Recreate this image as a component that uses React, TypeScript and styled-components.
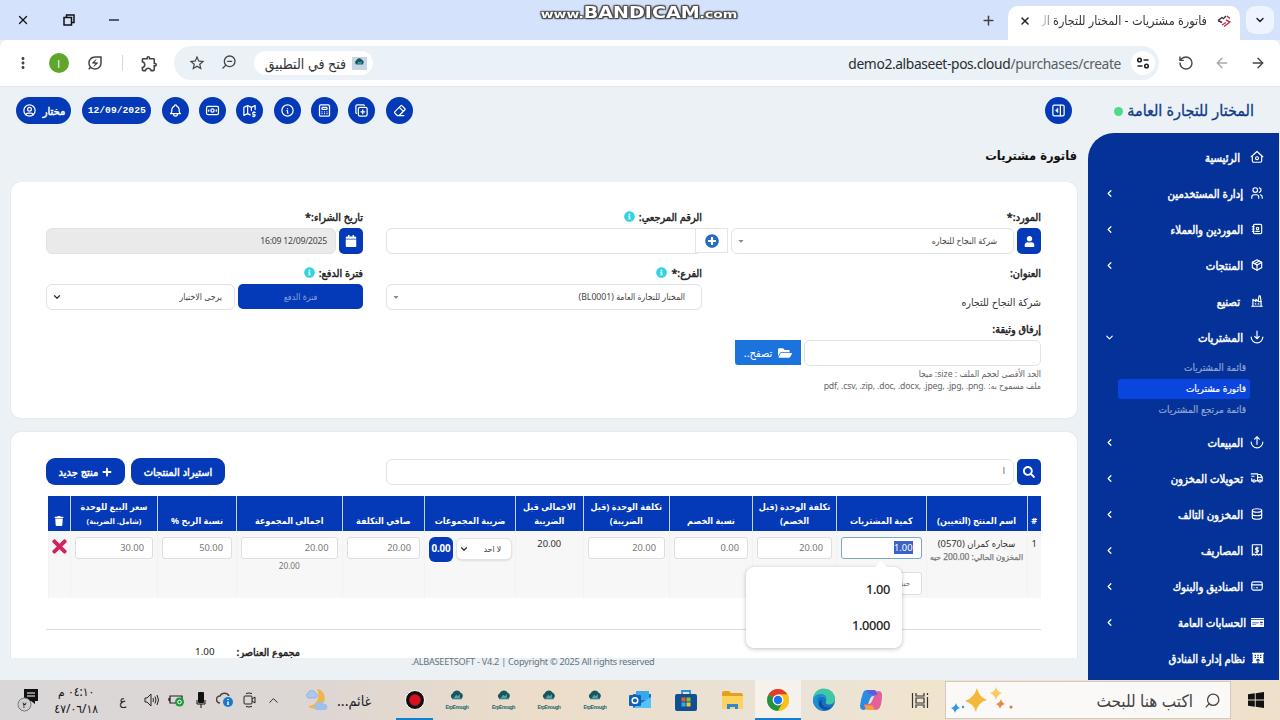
import React from 'react';
import styled, { createGlobalStyle, css } from 'styled-components';
import {
  TbBell, TbMapDollar, TbInfoCircle, TbCalculator, TbCopyPlus, TbEraser, TbUserCircle,
  TbUsers, TbAddressBook, TbPackage, TbBuildingFactory2, TbTruckDelivery, TbDatabase, TbCreditCard,
} from 'react-icons/tb';
import {
  FaUser, FaPlusCircle, FaInfoCircle, FaCalendar, FaFolderOpen, FaSearch, FaPlus, FaTrash, FaTimes,
  FaMoneyCheck, FaHotel, FaCaretDown,
} from 'react-icons/fa';
import { MdOutlineExtension, MdOutlineEnergySavingsLeaf, MdStarBorder, MdMoreVert } from 'react-icons/md';
import { ArrowLeft, ArrowRight, ChevronDown, ChevronLeft, ChevronUp, Plus, RotateCcw, Search, X, ZoomOut } from 'lucide-react';

const ui = `'Noto Sans', 'DejaVu Sans Condensed', 'DejaVu Sans', sans-serif`;
const primary = '#0439b7';
const heavy = css`font-weight: 400; -webkit-text-stroke: 0.45px currentColor;`;

const Global = createGlobalStyle`
  * { box-sizing: border-box; }
  body { margin: 0; overflow: hidden; font-family: ${ui}; color: #222; }
  svg { display: block; flex: none; }
`;

const Screen = styled.div`
  width: 1280px; height: 720px; display: flex; flex-direction: column;
  direction: rtl; position: relative; overflow: hidden; background: #ebf1f5; white-space: nowrap;
`;

/* ---------- browser chrome ---------- */
const TabStrip = styled.div`
  height: 40px; flex: none; background: #d4e3fb; display: flex; align-items: flex-end; padding: 0 6px 0 16px;
`;
const TabMenu = styled.div`
  width: 28px; height: 28px; margin-bottom: 6px; border-radius: 9px; background: #edf4fe;
  display: flex; align-items: center; justify-content: center;
`;
const Tab = styled.div`
  width: 232px; height: 34px; margin-right: 6px; background: #fff; border-radius: 10px 10px 0 0;
  display: flex; align-items: center; padding: 0 9px 4px 11px; gap: 10px;
`;
const TabTitle = styled.div`
  width: 166px; font-size: 12.5px; color: #333; line-height: 24px;
  mask-image: linear-gradient(to left, #000 152px, transparent 168px);
`;
const NewTab = styled.div`height: 40px; display: flex; align-items: center; margin-right: 12px;`;
const WindowButtons = styled.div`
  height: 40px; margin-right: auto; display: flex; align-items: center; gap: 33px; direction: ltr;
`;
const Watermark = styled.div`
  position: absolute; left: 539px; top: 4px; width: 200px; text-align: center; direction: ltr;
  font: bold 11px/19px 'DejaVu Sans', sans-serif; color: #fff; transform: scaleX(1.27);
  text-shadow: 0 0 2px #333, 1px 1px 1px #444, -1px -1px 1px #555, 1px -1px 1px #555, -1px 1px 1px #555;
  b { font-size: 15px; }
`;
const Toolbar = styled.div`
  height: 47px; flex: none; background: #fff; display: flex; align-items: center; padding: 0 14px 0 13px;
  border-bottom: 1px solid #e1e8ea; border-radius: 8px 8px 0 0; color: #444;
`;
const NavButtons = styled.div`display: flex; gap: 20px; direction: ltr;`;
const Omnibox = styled.div`
  width: 985px; height: 34px; flex: none; margin-right: 19px; border-radius: 17px; background: #eaf1f7;
  display: flex; align-items: center; padding: 0 4px 0 14px;
`;
const SiteInfo = styled.div`
  width: 24px; height: 24px; border-radius: 12px; background: #fff; display: flex; align-items: center; justify-content: center;
`;
const Url = styled.div`
  direction: ltr; font-size: 13.8px; letter-spacing: -0.37px; color: #5a5d60; margin-right: 10px;
  span { color: #2b2d30; }
`;
const OpenInApp = styled.div`
  margin-right: auto; width: 119px; height: 24px; border-radius: 12px; background: #fff; display: flex; align-items: center;
  padding: 0 6px; gap: 6px; font-size: 14px; color: #333;
`;
const OmniIcons = styled.div`display: flex; gap: 15px; margin-right: 17px;`;
const Extensions = styled.div`display: flex; align-items: center; margin-right: 15px;`;
const Divider = styled.i`width: 1.5px; height: 16px; background: #c9dbf5; margin: 0 17px 0 18px;`;
const Avatar = styled.div`
  width: 20px; height: 20px; border-radius: 50%; background: #5fa62b; color: #fff; font-size: 11px;
  display: flex; align-items: center; justify-content: center; margin: 0 17px 0 17px;
`;

/* ---------- application shell ---------- */
const AppArea = styled.div`height: 593px; flex: none; display: flex;`;
const Side = styled.aside`width: 192px; flex: none; display: flex; flex-direction: column; padding-right: 1px;`;
const Brand = styled.div`
  height: 46px; flex: none; display: flex; align-items: center; padding-right: 25px; gap: 4px;
  font-size: 16px; color: #123a8c; -webkit-text-stroke: 0.3px #123a8c;
  i { width: 9px; height: 9px; border-radius: 50%; background: #4fd98a; margin-top: 2px; }
`;
const Menu = styled.nav`
  flex: 1; background: #053298; border-top-left-radius: 26px; padding-top: 6px; overflow: hidden;
`;
const MenuItem = styled.div<{ $indent?: number }>`
  height: 36px; display: flex; align-items: center; padding: 0 15px 0 16px; color: #fff;
  font-size: 11.3px;
  span { margin-right: ${p => p.$indent ?? 7}px; margin-left: auto; ${heavy} }
`;
const SubMenu = styled.div`padding: 3px 29px 4px 30px; display: flex; flex-direction: column; gap: 1px;`;
const SubItem = styled.div<{ $active?: boolean }>`
  height: 20px; line-height: 19px; border-radius: 3px; padding-right: 4px; font-size: 10px;
  color: ${p => (p.$active ? '#fff' : '#8fa5d3')}; background: ${p => (p.$active ? '#0a45dd' : 'transparent')};
  -webkit-text-stroke: 0.2px currentColor;
`;
const Main = styled.main`width: 1088px; flex: none; display: flex; flex-direction: column; position: relative;`;
const Header = styled.header`height: 47px; flex: none; display: flex; align-items: center; padding: 0 16px;`;
const Actions = styled.div`display: flex; gap: 10.3px; margin-right: auto;`;
const Pill = styled.div<{ $w?: number }>`
  width: ${p => p.$w ?? 27}px; height: 27px; border-radius: 14px; background: ${primary}; color: #fff;
  display: flex; align-items: center; justify-content: center; gap: 6px; font-size: 11px; ${heavy}
  svg { -webkit-text-stroke: 0; }
  &:last-child { margin-right: 0.7px; }
`;
const DateText = styled.span`font: bold 9.7px 'Liberation Mono', monospace; -webkit-text-stroke: 0;`;
const PageTitle = styled.h1`
  margin: 0; height: 48px; flex: none; padding-right: 11px; font: bold 12.8px/44px 'DejaVu Sans Condensed', 'DejaVu Sans', sans-serif; color: #111;
`;
const Content = styled.div`height: 476px; overflow: hidden; padding: 0 11px; display: flex; flex-direction: column; gap: 14px;`;
const Card = styled.section<{ $h: number }>`
  height: ${p => p.$h}px; flex: none; background: #fff; border-radius: 10px; padding: 22px 36px 0 35px;
  box-shadow: 0 0 2px rgba(150, 170, 190, 0.25);
`;
const Footer = styled.footer`
  position: absolute; left: 411px; bottom: 11px; font-size: 9.2px; line-height: 14px; letter-spacing: -0.28px; color: #67737c;
`;

/* ---------- form ---------- */
const FormGrid = styled.div`
  display: grid; grid-template-columns: 316px 316px 317px; column-gap: 23px; grid-auto-rows: 50px; row-gap: 6px;
`;
const Field = styled.div`min-width: 0;`;
const Label = styled.label`
  height: 24px; display: flex; align-items: center; gap: 4px; font-size: 10.8px; color: #222; ${heavy}
  svg { color: #33d4e0; }
`;
const Group = styled.div`display: flex; gap: 3px; height: 26px;`;
const SquareButton = styled.div`
  width: 24px; height: 26px; flex: none; border-radius: 5px; background: ${primary}; color: #fff;
  display: flex; align-items: center; justify-content: center;
`;
const Control = styled.div<{ $w?: number; $pad?: number; $disabled?: boolean }>`
  width: ${p => (p.$w ? p.$w + 'px' : '100%')}; height: 26px; flex: none; border: 1px solid #dfe3e5; border-radius: 6px;
  background: ${p => (p.$disabled ? '#eaeaea' : '#fff')}; display: flex; align-items: center; justify-content: space-between;
  padding: 0 ${p => p.$pad ?? 16}px 1px 5px; font-size: 8.7px; color: #444;
  letter-spacing: ${p => (p.$disabled ? '-0.25px' : 'normal')};
`;
const AddOn = styled.div`
  width: 33px; height: 25px; flex: none; border: 1px solid #e3e5e8; background: #fff; position: relative; z-index: 1;
  display: flex; align-items: center; justify-content: center; color: #256bc4;
`;
const TermButton = styled.div`
  width: 125px; height: 25px; flex: none; border-radius: 5px; background: ${primary}; color: #8ba4d9; font-size: 8.8px;
  display: flex; align-items: center; justify-content: center;
`;
const Address = styled.div`font-size: 10.6px; color: #333; padding-top: 10px; line-height: 16px;`;
const Browse = styled.div`
  width: 66px; height: 25px; flex: none; background: #1c73de; color: #fff; border-radius: 0 0 0 3px; font-size: 11px;
  display: flex; align-items: center; justify-content: center; gap: 6px;
`;
const Hint = styled.div`
  font-size: 8.7px; line-height: 12px; color: #666; padding-top: 2px;
  span { letter-spacing: -0.15px; }
`;

/* ---------- items table ---------- */
const SearchRow = styled.div`display: flex; align-items: center; gap: 3px; height: 27px; margin-top: 4px; margin-bottom: 11px;`;
const BigButton = styled.div<{ $w: number }>`
  width: ${p => p.$w}px; height: 27px; border-radius: 9px; background: ${primary}; color: #fff; font-size: 11px; ${heavy}
  display: flex; align-items: center; justify-content: center; gap: 4px;
`;
const Buttons = styled.div`display: flex; gap: 6px; margin-right: auto;`;
const columns = '14.5px 101px 89.5px 84px 83px 86.5px 67.5px 91px 82.5px 105.5px 79px 87px 22.5px';
const Row = styled.div`display: grid; grid-template-columns: ${columns}; margin-left: 1.5px;`;
const HeadRow = styled(Row)`height: 35px; background: ${primary}; color: #fff;`;
const Th = styled.div`
  border-left: 1px solid #c5d3f2; display: flex; flex-direction: column; justify-content: flex-end; align-items: center;
  font-size: 9px; font-weight: bold; line-height: 14px; padding-bottom: 3px;
  small { font-size: 7.7px; }
  &:last-child { border-left: 0; padding-bottom: 5px; }
`;
const BodyRow = styled(Row)`height: 67px; background: #f7f7f7;`;
const Td = styled.div<{ $center?: boolean }>`
  padding: 5.5px 4px 0; border-left: 1px solid #f2f2f2; min-width: 0; font-size: 9.4px; color: #333;
  ${p => p.$center && css`text-align: center;`}
`;
const CellInput = styled.div<{ $focus?: boolean }>`
  height: 22.5px; border: 1px solid ${p => (p.$focus ? '#7ea7c0' : '#dfdfdf')}; border-radius: 3px; background: #fff;
  padding: 0 8px; font-size: 9.3px; line-height: 20px; color: #777; text-align: right;
  mark { background: #3a62c8; color: #fff; padding: 0; }
`;
const UnitSelect = styled(CellInput)`margin-top: 13px; font-size: 8.5px; padding-right: 10px;`;
const Sub = styled.div<{ $b?: boolean }>`
  font-size: ${p => (p.$b ? 8.4 : 8.3)}px; color: #777; line-height: 14px; ${p => p.$b && css`margin: 0 -3px; -webkit-text-stroke: 0.25px #777;`}
`;
const TaxCell = styled.div`display: flex; gap: 3px; margin: 0 -1px;`;
const TaxSelect = styled.div`
  width: 56px; height: 22px; margin-top: 1px; border: 1px solid #e3e3e3; border-radius: 6px; background: #fff; font-size: 8.4px;
  display: flex; align-items: center; justify-content: space-between; padding: 0 10px 0 2px; box-shadow: 0 1px 2px #ddd;
`;
const TaxBadge = styled.div`
  width: 24px; height: 25px; border-radius: 6px; background: ${primary}; color: #fff; font-weight: bold; font-size: 9.8px;
  line-height: 24px; text-align: center; letter-spacing: -0.2px;
`;
const Totals = styled.div`
  margin-top: 31px; border-top: 1.5px solid #dcdcdc; padding: 16px 741px 0 0; display: flex; gap: 22px;
  font-size: 10.5px; line-height: 12px; b { color: #222; font-size: 10.8px; ${heavy} }
  span { font-size: 9.8px; }
`;
const Suggest = styled.div`
  position: absolute; left: 746px; top: 567px; width: 156px; height: 81px; border-radius: 8px; background: #fff;
  box-shadow: 0 1px 4px rgba(0, 0, 0, 0.25); padding: 4px 12px; font: 500 12.8px/36px 'Noto Sans', sans-serif; letter-spacing: -0.35px; color: #222;
  svg { position: absolute; left: 128px; top: -6px; }
`;

/* ---------- taskbar ---------- */
const Taskbar = styled.div`
  height: 40px; flex: none; display: flex; align-items: center; position: relative;
  background: linear-gradient(90deg, #dad7d8 0%, #ddd6d3 25%, #ecddc9 42%, #e9e3d8 62%, #f1e4cd 72%, #efe0cc 100%);
`;
const StartButton = styled.div`width: 49px; height: 40px; display: flex; align-items: center; justify-content: center;`;
const SearchBox = styled.div`
  width: 286px; height: 38px; background: #fbf9f7; border: 1px solid #cfc9c0; display: flex; align-items: center;
  padding: 0 9px 0 5px; gap: 11px; font-size: 17px; color: #444;
  svg:first-child { transform: scaleX(-1); }
  svg:last-child { margin-right: auto; }
`;
const Apps = styled.div`display: flex; height: 40px;`;
const AppSlot = styled.div<{ $w?: number; $active?: boolean; $line?: boolean }>`
  width: ${p => p.$w ?? 46}px; height: 40px; display: flex; align-items: center; justify-content: center;
  background: ${p => (p.$active ? 'rgba(255,255,255,.55)' : 'none')};
  box-shadow: ${p => (p.$line || p.$active ? 'inset 0 -2px 0 #1580cf' : 'none')};
`;
const Weather = styled.div`
  display: flex; align-items: center; margin-right: 24px; gap: 7px; direction: ltr; font-size: 14.3px; color: #222;
  width: 68px;
`;
const Tray = styled.div`display: flex; align-items: center; margin-right: 18px; color: #222;`;
const TraySlot = styled.div<{ $w?: number }>`
  width: ${p => p.$w ?? 24.3}px; display: flex; justify-content: center; font-size: 13px;
`;
const Clock = styled.div`
  width: 46px; margin-right: 6px; margin-left: 12px; text-align: center; font-size: 12px; line-height: 17px; color: #111;
`;

/* ---------- drawings ---------- */
const line = { fill: 'none', stroke: 'currentColor', strokeWidth: 1.6, strokeLinecap: 'round', strokeLinejoin: 'round' } as const;

const HomeIcon = () => (
  <svg width="14" height="14" viewBox="0 0 24 24" {...line} strokeWidth={2}><path d="M4 10v9q0 2 2 2h12q2 0 2-2v-9M2 11.500 12 2.500l10 9" /><circle cx="12" cy="14" r="2.500" /></svg>
);
const ArrowBowl = ({ up }: { up?: boolean }) => (
  <svg width="14" height="14" viewBox="0 0 24 24" {...line} strokeWidth={2}>
    <path d="M2 12a10 10 0 0 0 20 0" /><path d={up ? 'M12 16V3m-4 4 4-4 4 4' : 'M12 2v13m-4-4 4 4 4-4'} />
  </svg>
);
const BillIcon = () => (
  <svg width="14" height="14" viewBox="0 0 24 24" {...line} strokeWidth={2}>
    <path d="M4 21V3h16v18l-2.700-2-2.600 2-2.700-2-2.700 2-2.600-2z" /><path d="M15 8.500h-4a1.800 1.800 0 0 0 0 3.500h2a1.800 1.800 0 0 1 0 3.500H9M12 7v10" />
  </svg>
);
const SidebarToggle = () => (
  <svg width="15" height="15" viewBox="0 0 24 24" {...line} strokeWidth={2}>
    <rect x="3" y="3.500" width="18" height="17" rx="2" /><path d="M15 3.500v17" /><path d="M11 8.500v7L7.500 12z" fill="currentColor" strokeWidth={1} />
  </svg>
);
const BanknoteIcon = () => (
  <svg width="15" height="15" viewBox="0 0 24 24" {...line} strokeWidth={2}>
    <rect x="2.500" y="5.500" width="19" height="13" rx="2" /><circle cx="12" cy="12" r="2.600" /><path d="M6 11v2M18 11v2" />
  </svg>
);
const Cloud = ({ s = 22 }: { s?: number }) => (
  <svg width={s} height={s * 0.75} viewBox="0 0 22 16">
    <path d="M5 10a3.500 3.500 0 0 1 .5-6A5.500 5.500 0 0 1 15.500 3a4 4 0 0 1 1 7z" fill="#17565f" />
    <path d="M7 9.500l3-4 2 2 2.500-3v5z" fill="#52a5a5" />
    <path d="M5 10.500h12" stroke="#1c6a72" />
  </svg>
);
const ErpLabel = styled.div`
  display: flex; flex-direction: column; align-items: center; direction: ltr; color: #24666d; font: bold 5px/6px 'Liberation Sans Narrow', 'Liberation Sans', sans-serif;
  letter-spacing: -0.45px;
`;
const AppIcon = styled.span`
  width: 15px; height: 13px; background: #c7d6e2; display: flex; align-items: center; justify-content: center;
`;
const Erp = () => <ErpLabel><Cloud s={18} />ErpEnough</ErpLabel>;

const BandicamIcon = () => (
  <svg width="20" height="20" viewBox="0 0 20 20"><circle cx="10" cy="10" r="9.500" fill="#111" stroke="#fff" /><circle cx="10" cy="10" r="5.800" fill="#d9101f" /></svg>
);
const OutlookIcon = () => (
  <svg width="24" height="22" viewBox="0 0 24 22">
    <path d="M4 5h18v14H4z" fill="#1b6fc9" /><path d="M7 2h13v9H7z" fill="#37a9ea" /><path d="M4 19 22 8v11z" fill="#52c3f5" />
    <rect x="0" y="6" width="12" height="11" rx="1" fill="#0f62b5" /><circle cx="6" cy="11.500" r="2.800" fill="none" stroke="#fff" strokeWidth="1.500" />
  </svg>
);
const StoreIcon = () => (
  <svg width="24" height="24" viewBox="0 0 24 24">
    <path d="M8 6V3h8v3" fill="none" stroke="#2492dd" strokeWidth="1.800" /><rect x="1" y="6" width="22" height="17" rx="2" fill="#124f91" />
    <path d="M7.500 9.500h4v4h-4z" fill="#ee5632" /><path d="M12.500 9.500h4v4h-4z" fill="#87c22f" /><path d="M7.500 14.500h4v4h-4z" fill="#35a9e6" /><path d="M12.500 14.500h4v4h-4z" fill="#f8c32e" />
  </svg>
);
const FolderIcon = () => (
  <svg width="23" height="20" viewBox="0 0 23 20">
    <path d="M1 3q0-2 2-2h5l2 2h10q2 0 2 2v12H1z" fill="#e3a21a" /><path d="M1 6h21v12q0 1-1 1H2q-1 0-1-1z" fill="#fbd35e" /><path d="M6 19v-5h11v5h-3v-2H9v2z" fill="#2e86d6" />
  </svg>
);
const ChromeIcon = () => (
  <svg width="24" height="24" viewBox="0 0 24 24">
    <circle cx="12" cy="12" r="11" fill="#fbc116" />
    <path d="M12 12 2.500 6.500A11 11 0 0 1 21.500 6.500H12z" fill="#e33b2e" />
    <path d="M12 12 2.500 6.500A11 11 0 0 0 12 23l4.700-8.300z" fill="#229342" />
    <path d="M12 6.500h9.500A11 11 0 0 1 12 23l5-9z" fill="#fbc116" />
    <circle cx="12" cy="12" r="5.400" fill="#fff" /><circle cx="12" cy="12" r="4.200" fill="#1a73e8" />
  </svg>
);
const EdgeIcon = () => (
  <svg width="24" height="24" viewBox="0 0 24 24">
    <circle cx="12" cy="12" r="11" fill="#1a6fc4" />
    <path d="M1 12A11 11 0 0 1 23 11c0 4-3 5.500-6 5.500s-4-1.500-3-3c1-2-.5-5-4-5S2 10 1 12z" fill="#3fc8a6" />
    <path d="M1 12c1-4 4-6.500 9-6 4 .5 5 4 4 7 0-3-2-4.500-4-4.500-5 0-7 8 2 13.500-6 1-11-4-11-10z" fill="#1d8fd6" />
    <path d="M10 12c-2 5 3 9 9 7-4 5-13 2-12-4 .3-1.500 1.500-3 3-3z" fill="#0c4f97" />
  </svg>
);
const CopilotIcon = () => (
  <svg width="24" height="22" viewBox="0 0 24 22">
    <path d="M8 1h7q2 0 3 3l1 3h-5q-2 0-3 3l-3 8q-1 3-3 3-4 0-4-4Q2 9 4 4 5 1 8 1z" fill="#2a8be0" />
    <path d="M16 21H9q-2 0-3-3l-1-3h5q2 0 3-3l3-7q1-3 3-3 4 0 4 4 0 8-2 12-1 3-5 3z" fill="#e3609c" />
    <path d="M16 21H9q-2 0-3-3l-.5-2 8 .5z" fill="#f4a13b" /><path d="M8 1h7q2 0 3 3l.5 2L10 5z" fill="#5a5ed8" />
  </svg>
);
const TaskView = () => (
  <svg width="18" height="17" viewBox="0 0 18 17" fill="none" stroke="#333" strokeWidth="1.200">
    <path d="M5 1v3h8V1M5 16v-3h8v3M5 6h8v5H5zM1.500 1v15M16.500 1v2M16.500 5v11" />
  </svg>
);
const WindowsLogo = () => (
  <svg width="16" height="16" viewBox="0 0 16 16" fill="#111"><path d="M0 2.300 6.800 1.300v6.200H0zM7.700 1.200 16 0v7.500H7.700zM0 8.400h6.800v6.300L0 13.700zM7.700 8.400H16V16l-8.300-1.200z" /></svg>
);
const Sparkles = () => (
  <svg width="66" height="30" viewBox="0 0 66 30">
    <path d="M26 3q2 9 10 12-9 2-11 12-3-9-11-11 9-3 12-13z" fill="#f7b73a" />
    <path d="M45 2q1 5 6 6-5 2-6 7-1-5-6-7 5-1 6-6z" fill="#f8c95c" />
    <path d="M50 14q1 4 4 5-4 1-5 5-1-4-4-5 4-1 5-5z" fill="#e78a42" /><path d="M5 18q1 4 4 5-4 1-5 5-1-4-4-5 4-1 5-5z" fill="#2f9ae0" /><circle cx="60" cy="22" r="1.500" fill="#d77b35" /><circle cx="12" cy="22" r="1.200" fill="#2f9ae0" />
  </svg>
);
const MoonCloud = () => (
  <svg width="26" height="24" viewBox="0 0 26 24">
    <path d="M13 1c8 1 11 12 3 18-4 3-9 2-12-1 8 0 13-8 9-17z" fill="#efb548" />
    <path d="M4 10a3 3 0 0 1 0-5 4 4 0 0 1 7.500 0 2.600 2.600 0 0 1 0 5z" fill="#a9c8f2" stroke="#7f9fd6" strokeWidth="0.600" />
    <path d="M12 22a3 3 0 0 1 0-5.500 4 4 0 0 1 7.500-.5 3 3 0 0 1 1.500 6z" fill="#9dc0f0" />
  </svg>
);
const TrayCamera = () => (
  <svg width="14" height="16" viewBox="0 0 14 16" fill="none" stroke="#222"><rect x="1" y="4" width="8" height="8" rx="1" /><path d="m9 7 3-2v6l-3-2M3 1.500q3-1 6 0M3 14.500q3 1 6 0" /></svg>
);
const TrayCloud = () => (
  <svg width="18" height="16" viewBox="0 0 18 16"><path d="M4 11a3.500 3.500 0 0 1 0-7 5 5 0 0 1 9 0" fill="none" stroke="#444" strokeWidth="1.500" /><circle cx="12" cy="10" r="5" fill="#1b78d2" /><path d="M12 7v1M12 9.500V13" stroke="#fff" strokeWidth="1.500" /></svg>
);
const TrayMic = () => (
  <svg width="10" height="16" viewBox="0 0 10 16"><rect x="2" y="0" width="6" height="11" rx="1" fill="#111" /><path d="M1 8v4h8V8M5 12v4" fill="none" stroke="#111" /></svg>
);
const TrayBattery = () => (
  <svg width="17" height="14" viewBox="0 0 17 14"><path d="M2 3h12v7H2zM1 5v3" fill="none" stroke="#222" strokeWidth="1.200" /><circle cx="11.500" cy="9" r="4.500" fill="#1b9c3b" /><circle cx="11.500" cy="9" r="1.800" fill="none" stroke="#fff" /></svg>
);
const TraySound = () => (
  <svg width="16" height="14" viewBox="0 0 16 14" fill="none" stroke="#222"><path d="M1 5h2l4-4v12L3 9H1zM9 5q1 2 0 4M11 3.500q2 3.500 0 7M13 2q3 5 0 10" /></svg>
);
const TrayNote = () => (
  <svg width="24" height="26" viewBox="0 0 24 26">
    <path d="M7 2h14v12h-3v3l-4-3H7z" fill="#111" /><path d="M10 6h8M10 9h8" stroke="#fff" /><circle cx="7.500" cy="17.500" r="6.500" fill="#d0d0d0" stroke="#777" />
    <text x="7.500" y="21" fontSize="9" textAnchor="middle" fill="#111">٢</text>
  </svg>
);

const menu = [
  { t: 'الرئيسية', i: <HomeIcon />, indent: 10, leaf: true },
  { t: 'إدارة المستخدمين', i: <TbUsers size={14} /> },
  { t: 'الموردين والعملاء', i: <TbAddressBook size={14} /> },
  { t: 'المنتجات', i: <TbPackage size={14} /> },
  { t: 'تصنيع', i: <TbBuildingFactory2 size={14} />, indent: 10, leaf: true },
  { t: 'المشتريات', i: <ArrowBowl />, open: true },
  { t: 'المبيعات', i: <ArrowBowl up /> },
  { t: 'تحويلات المخزون', i: <TbTruckDelivery size={14} /> },
  { t: 'المخزون التالف', i: <TbDatabase size={14} /> },
  { t: 'المصاريف', i: <BillIcon /> },
  { t: 'الصناديق والبنوك', i: <TbCreditCard size={14} /> },
  { t: 'الحسابات العامة', i: <FaMoneyCheck size={13} />, indent: 5 },
  { t: 'نظام إدارة الفنادق', i: <FaHotel size={12} />, leaf: true },
];

const Info = () => <FaInfoCircle size={11} />;
const Caret = () => <FaCaretDown size={8} color="#888" />;

export default function App() {
  return (
    <Screen>
      <Global />
      <TabStrip>
        <TabMenu><ChevronDown size={12} strokeWidth={3} /></TabMenu>
        <Tab>
          <svg width="14" height="14" viewBox="0 0 14 14" fill="none" strokeWidth="1.400">
            <path d="M1 6.500 5 3.500 7 5M1 6.500l4 2M9 2 7 4" stroke="#3d2b3a" /><path d="M5 11l4-2.500M7 12.500l6-4.500-4-2M10 2l3 2.500" stroke="#b5314b" />
          </svg>
          <TabTitle>فاتورة مشتريات - المختار للتجارة ال</TabTitle>
          <X size={12} strokeWidth={3} />
        </Tab>
        <NewTab><Plus size={15} strokeWidth={2.4} color="#444" /></NewTab>
        <WindowButtons>
          <X size={14} strokeWidth={2.2} color="#111" />
          <svg width="12" height="12" viewBox="0 0 12 12" fill="none" stroke="#111" strokeWidth="1.500"><path d="M1 3.500h7.500V11H1zM3.500 3.500V1H11v7.500H8.500" /></svg>
          <svg width="12" height="12" viewBox="0 0 12 12"><path d="M1 6h10" stroke="#111" strokeWidth="1.300" /></svg>
        </WindowButtons>
      </TabStrip>
      <Watermark>www.<b>BANDICAM</b>.com</Watermark>
      <Toolbar>
        <NavButtons>
          <RotateCcw size={16} strokeWidth={2.1} />
          <ArrowLeft size={16} strokeWidth={2.1} color="#a5a8ab" />
          <ArrowRight size={16} strokeWidth={2.1} />
        </NavButtons>
        <Omnibox>
          <SiteInfo>
            <svg width="14" height="12" viewBox="0 0 14 12" fill="none" stroke="#222" strokeWidth="1.600"><circle cx="3.500" cy="3" r="1.800" /><path d="M7.500 3h5M1.500 9h5" /><circle cx="10.500" cy="9" r="1.800" /></svg>
          </SiteInfo>
          <Url><span>demo2.albaseet-pos.cloud</span>/purchases/create</Url>
          <OpenInApp><AppIcon><Cloud s={13} /></AppIcon>فتح في التطبيق</OpenInApp>
          <OmniIcons>
            <ZoomOut size={16} style={{ transform: 'scaleX(-1)' }} />
            <MdStarBorder size={18} />
          </OmniIcons>
        </Omnibox>
        <Extensions>
          <MdOutlineExtension size={19} />
          <Divider />
          <MdOutlineEnergySavingsLeaf size={18} />
          <Avatar>ا</Avatar>
          <MdMoreVert size={18} />
        </Extensions>
      </Toolbar>

      <AppArea>
        <Side>
          <Brand>المختار للتجارة العامة<i /></Brand>
          <Menu>
            {menu.map(m => (
              <React.Fragment key={m.t}>
                <MenuItem $indent={m.indent}>
                  {m.i}
                  <span>{m.t}</span>
                  {!m.leaf && (m.open ? <ChevronDown size={11} strokeWidth={2.6} /> : <ChevronLeft size={11} strokeWidth={2.6} />)}
                </MenuItem>
                {m.open && (
                  <SubMenu>
                    <SubItem>قائمة المشتريات</SubItem>
                    <SubItem $active>فاتورة مشتريات</SubItem>
                    <SubItem>قائمة مرتجع المشتريات</SubItem>
                  </SubMenu>
                )}
              </React.Fragment>
            ))}
          </Menu>
        </Side>

        <Main>
          <Header>
            <Pill><SidebarToggle /></Pill>
            <Actions>
              <Pill><TbEraser size={15} /></Pill>
              <Pill><TbCopyPlus size={15} /></Pill>
              <Pill><TbCalculator size={15} /></Pill>
              <Pill><TbInfoCircle size={15} /></Pill>
              <Pill><TbMapDollar size={15} /></Pill>
              <Pill><BanknoteIcon /></Pill>
              <Pill><TbBell size={15} /></Pill>
              <Pill $w={69.5}><DateText>12/09/2025</DateText></Pill>
              <Pill $w={55}>مختار<TbUserCircle size={15} /></Pill>
            </Actions>
          </Header>
          <PageTitle>فاتورة مشتريات</PageTitle>
          <Content>
            <Card $h={236}>
              <FormGrid>
                <Field>
                  <Label>المورد:*</Label>
                  <Group>
                    <SquareButton><FaUser size={11} /></SquareButton>
                    <Control $w={283}>شركة النجاح للتجاره<Caret /></Control>
                    <AddOn><FaPlusCircle size={14} /></AddOn>
                  </Group>
                </Field>
                <Field>
                  <Label>الرقم المرجعي: <Info /></Label>
                  <Control />
                </Field>
                <Field>
                  <Label>تاريخ الشراء:*</Label>
                  <Group>
                    <SquareButton><FaCalendar size={12} /></SquareButton>
                    <Control $w={290} $pad={8} $disabled>12/09/2025 16:09</Control>
                  </Group>
                </Field>
                <Field>
                  <Label>العنوان:</Label>
                  <Address>شركة النجاح للتجاره</Address>
                </Field>
                <Field>
                  <Label>الفرع:* <Info /></Label>
                  <Control>المختار للتجارة العامة (BL0001)<Caret /></Control>
                </Field>
                <Field>
                  <Label>فترة الدفع: <Info /></Label>
                  <Group>
                    <TermButton>فترة الدفع</TermButton>
                    <Control $w={189} $pad={12}>يرجى الاختيار<ChevronDown size={10} strokeWidth={3} color="#333" /></Control>
                  </Group>
                </Field>
                <Field>
                  <Label>إرفاق وثيقة:</Label>
                  <Group>
                    <Control $w={237} />
                    <Browse><FaFolderOpen size={14} />تصفح..</Browse>
                  </Group>
                  <Hint>
                    <div>الحد الأقصى لحجم الملف : size: ميجا</div>
                    <div>ملف مسموح به: <span>.pdf, .csv, .zip, .doc, .docx, .jpeg, .jpg, .png</span></div>
                  </Hint>
                </Field>
              </FormGrid>
            </Card>

            <Card $h={260}>
              <SearchRow>
                <SquareButton><FaSearch size={12} /></SquareButton>
                <Control $w={628} $pad={8}>ا</Control>
                <Buttons>
                  <BigButton $w={94}>استيراد المنتجات</BigButton>
                  <BigButton $w={79}><FaPlus size={10} />منتج جديد</BigButton>
                </Buttons>
              </SearchRow>
              <HeadRow>
                <Th>#</Th>
                <Th>اسم المنتج (التعيين)</Th>
                <Th>كمية المشتريات</Th>
                <Th><div>تكلفة الوحدة (قبل</div><div>الخصم)</div></Th>
                <Th>نسبة الخصم</Th>
                <Th><div>تكلفة الوحدة (قبل</div><div>الضريبة)</div></Th>
                <Th><div>الاجمالى قبل</div><div>الضريبة</div></Th>
                <Th>ضريبة المجموعات</Th>
                <Th>صافي التكلفة</Th>
                <Th>اجمالى المجموعة</Th>
                <Th>نسبة الربح %</Th>
                <Th><div>سعر البيع للوحدة</div><small>(شامل. الضريبة)</small></Th>
                <Th><FaTrash size={10} /></Th>
              </HeadRow>
              <BodyRow>
                <Td $center>1</Td>
                <Td $center>سجاره كمران (0570)<Sub $b>المخزون الحالي: 200.00 حبه</Sub></Td>
                <Td><CellInput $focus><mark>1.00</mark></CellInput><UnitSelect>حبة</UnitSelect></Td>
                <Td><CellInput>20.00</CellInput></Td>
                <Td><CellInput>0.00</CellInput></Td>
                <Td><CellInput>20.00</CellInput></Td>
                <Td $center>20.00</Td>
                <Td>
                  <TaxCell>
                    <TaxSelect>لا احد<ChevronDown size={10} strokeWidth={3} /></TaxSelect>
                    <TaxBadge>0.00</TaxBadge>
                  </TaxCell>
                </Td>
                <Td><CellInput>20.00</CellInput></Td>
                <Td $center><CellInput>20.00</CellInput><Sub>20.00</Sub></Td>
                <Td><CellInput>50.00</CellInput></Td>
                <Td><CellInput>30.00</CellInput></Td>
                <Td><FaTimes size={21} color="#d3235c" style={{ margin: '-1px -3.500px' }} /></Td>
              </BodyRow>
              <Totals><b>مجموع العناصر:</b><span>1.00</span></Totals>
            </Card>
          </Content>
          <Footer>ALBASEETSOFT - V4.2 | Copyright © 2025 All rights reserved.</Footer>
        </Main>
      </AppArea>

      <Suggest>
        <svg width="14" height="7" viewBox="0 0 14 7"><path d="M0 7 7 0l7 7z" fill="#fff" /></svg>
        <div>1.00</div>
        <div>1.0000</div>
      </Suggest>

      <Taskbar>
        <StartButton><WindowsLogo /></StartButton>
        <SearchBox><Search size={17} strokeWidth={1.8} />اكتب هنا للبحث<Sparkles /></SearchBox>
        <Apps>
          <AppSlot $w={50}><TaskView /></AppSlot>
          <AppSlot $w={48}><CopilotIcon /></AppSlot>
          <AppSlot><EdgeIcon /></AppSlot>
          <AppSlot $active><ChromeIcon /></AppSlot>
          <AppSlot><FolderIcon /></AppSlot>
          <AppSlot><StoreIcon /></AppSlot>
          <AppSlot $w={45}><OutlookIcon /></AppSlot>
          <AppSlot><Erp /></AppSlot>
          <AppSlot><Erp /></AppSlot>
          <AppSlot $w={45}><Erp /></AppSlot>
          <AppSlot $w={48}><Erp /></AppSlot>
          <AppSlot $w={37} $line><BandicamIcon /></AppSlot>
        </Apps>
        <Weather><MoonCloud /><span dir="rtl">غائم...</span></Weather>
        <Tray>
          <TraySlot><ChevronUp size={15} strokeWidth={1.5} /></TraySlot>
          <TraySlot><TrayCamera /></TraySlot>
          <TraySlot><TrayCloud /></TraySlot>
          <TraySlot><TrayMic /></TraySlot>
          <TraySlot><TrayBattery /></TraySlot>
          <TraySlot><TraySound /></TraySlot>
          <TraySlot $w={35}>ع</TraySlot>
        </Tray>
        <Clock><div>٠٤:١٠ م</div><div dir="ltr">٤٧/٠٦/١٨</div></Clock>
        <TrayNote />
      </Taskbar>
    </Screen>
  );
}
